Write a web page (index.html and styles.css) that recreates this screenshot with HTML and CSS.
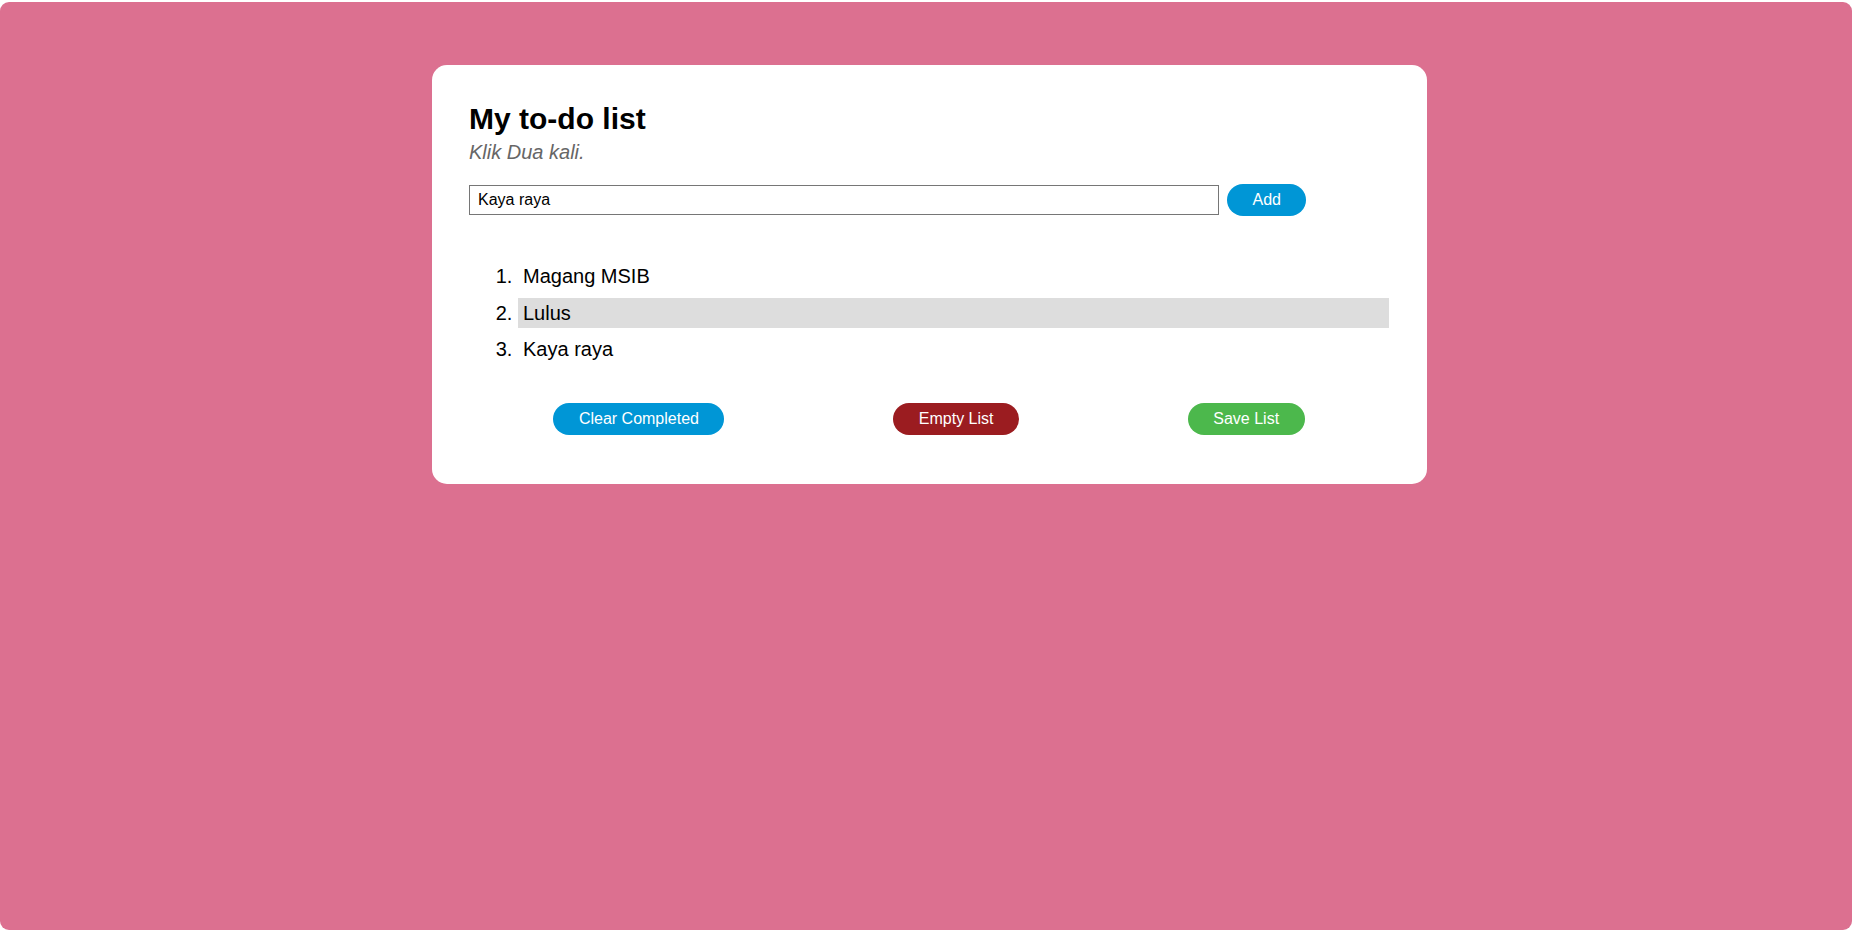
FILE: index.html
```html
<!DOCTYPE html>
<html lang="id">
<head>
<meta charset="utf-8">
<title>My to-do list</title>
<link rel="stylesheet" href="styles.css">
</head>
<body>
<main class="page">
  <section class="card">
    <h1 class="title">My to-do list</h1>
    <p class="subtitle">Klik Dua kali.</p>
    <form class="add-row">
      <input class="add-input" type="text" value="Kaya raya">
      <button type="button" class="btn btn-blue">Add</button>
    </form>
    <ol class="todo-list">
      <li class="todo-item">Magang MSIB</li>
      <li class="todo-item is-hover">Lulus</li>
      <li class="todo-item">Kaya raya</li>
    </ol>
    <div class="actions">
      <button type="button" class="btn btn-blue">Clear Completed</button>
      <button type="button" class="btn btn-red">Empty List</button>
      <button type="button" class="btn btn-green">Save List</button>
    </div>
  </section>
</main>
</body>
</html>
```

FILE: styles.css
```css
html {
  background: #ffffff;
  margin: 0;
  padding: 0;
}

body {
  margin: 2px 0 0 0;
  min-height: 928px;
  background: #dc7090;
  border-radius: 9px;
  font-family: "Liberation Sans", Arial, sans-serif;
  color: #000;
}

.page {
  padding: 63px 0 0 7px;
}

.card {
  box-sizing: border-box;
  width: 995px;
  margin: 0 auto;
  background: #ffffff;
  border-radius: 15px;
  padding: 37px 38px 49px 37px;
}

.title {
  margin: 0;
  font-size: 30px;
  font-weight: bold;
  line-height: 34.5px;
}

.subtitle {
  margin: 4px 0 0 0;
  font-size: 20px;
  line-height: 23px;
  font-style: italic;
  color: #666666;
}

.add-row {
  display: flex;
  align-items: center;
  gap: 8px;
  margin-top: 20px;
}

.add-input {
  box-sizing: border-box;
  width: 750px;
  height: 30px;
  margin: 0;
  padding: 0 8px;
  border: 1px solid #767676;
  border-radius: 0;
  font-family: "Liberation Sans", Arial, sans-serif;
  font-size: 16px;
  color: #000;
  background: #fff;
}

.btn {
  height: 32px;
  padding: 0 25.5px;
  border: none;
  border-radius: 16px;
  font-family: "Liberation Sans", Arial, sans-serif;
  font-size: 16px;
  color: #ffffff;
  cursor: pointer;
}

.btn-blue {
  background: #0096d6;
}

.btn-red {
  background: #9b1c20;
}

.btn-green {
  background: #4cb84c;
}

.todo-list {
  margin: 45.5px 0 0 0;
  padding: 0 0 0 49px;
  font-size: 20px;
}

.todo-item {
  padding: 4px 5px;
  line-height: 22px;
  margin-bottom: 6.5px;
}

.todo-item:last-child {
  margin-bottom: 0;
}

.todo-item.is-hover {
  background: #dddddd;
}

.actions {
  display: flex;
  justify-content: space-around;
  margin-top: 39px;
}
```
